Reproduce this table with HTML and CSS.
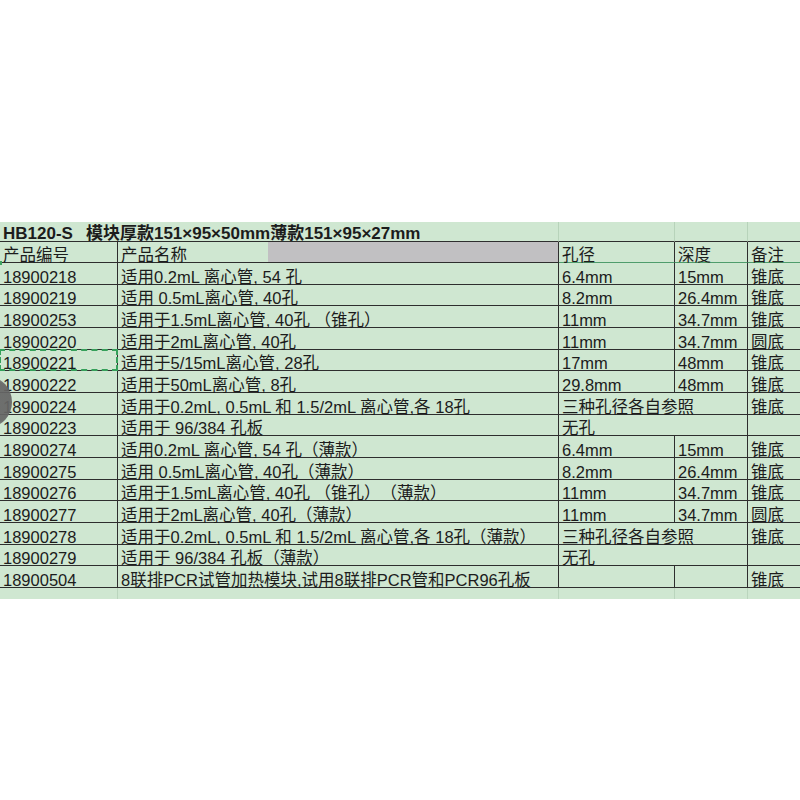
FILE: index.html
```html
<!DOCTYPE html>
<html lang="zh">
<head>
<meta charset="utf-8">
<title>HB120-S</title>
<link rel="stylesheet" href="styles.css">
</head>
<body>
<div class="sheet">
  <div class="blob"></div>

  <div class="c title span2"><span class="code">HB120-S</span>模块厚款151×95×50mm薄款151×95×27mm</div>
  <div class="c title-e"></div>
  <div class="c title-e"></div>
  <div class="c title-e last"></div>

  <div class="c">产品编号</div>
  <div class="c hdr-name">产品名称</div>
  <div class="c hdr-g">孔径</div>
  <div class="c hdr-g">深度</div>
  <div class="c hdr-g last">备注</div>

  <div class="c mark">18900218</div>
  <div class="c">适用0.2mL 离心管, 54 孔</div>
  <div class="c">6.4mm</div>
  <div class="c">15mm</div>
  <div class="c last">锥底</div>

  <div class="c">18900219</div>
  <div class="c">适用 0.5mL离心管, 40孔</div>
  <div class="c">8.2mm</div>
  <div class="c">26.4mm</div>
  <div class="c last">锥底</div>

  <div class="c">18900253</div>
  <div class="c">适用于1.5mL离心管, 40孔 （锥孔）</div>
  <div class="c">11mm</div>
  <div class="c">34.7mm</div>
  <div class="c last">锥底</div>

  <div class="c">18900220</div>
  <div class="c">适用于2mL离心管, 40孔</div>
  <div class="c">11mm</div>
  <div class="c">34.7mm</div>
  <div class="c last">圆底</div>

  <div class="c sel">18900221</div>
  <div class="c">适用于5/15mL离心管, 28孔</div>
  <div class="c">17mm</div>
  <div class="c">48mm</div>
  <div class="c last">锥底</div>

  <div class="c">18900222</div>
  <div class="c">适用于50mL离心管, 8孔</div>
  <div class="c">29.8mm</div>
  <div class="c">48mm</div>
  <div class="c last">锥底</div>

  <div class="c">18900224</div>
  <div class="c">适用于0.2mL, 0.5mL 和 1.5/2mL 离心管,各 18孔</div>
  <div class="c span2">三种孔径各自参照</div>
  <div class="c last">锥底</div>

  <div class="c">18900223</div>
  <div class="c">适用于 96/384 孔板</div>
  <div class="c span2">无孔</div>
  <div class="c last"></div>

  <div class="c">18900274</div>
  <div class="c">适用0.2mL 离心管, 54 孔（薄款）</div>
  <div class="c">6.4mm</div>
  <div class="c">15mm</div>
  <div class="c last">锥底</div>

  <div class="c">18900275</div>
  <div class="c">适用 0.5mL离心管, 40孔（薄款）</div>
  <div class="c">8.2mm</div>
  <div class="c">26.4mm</div>
  <div class="c last">锥底</div>

  <div class="c">18900276</div>
  <div class="c">适用于1.5mL离心管, 40孔 （锥孔）（薄款）</div>
  <div class="c">11mm</div>
  <div class="c">34.7mm</div>
  <div class="c last">锥底</div>

  <div class="c">18900277</div>
  <div class="c">适用于2mL离心管, 40孔（薄款）</div>
  <div class="c">11mm</div>
  <div class="c">34.7mm</div>
  <div class="c last">圆底</div>

  <div class="c">18900278</div>
  <div class="c">适用于0.2mL, 0.5mL 和 1.5/2mL 离心管,各 18孔（薄款）</div>
  <div class="c span2">三种孔径各自参照</div>
  <div class="c last">锥底</div>

  <div class="c">18900279</div>
  <div class="c">适用于 96/384 孔板（薄款）</div>
  <div class="c span2">无孔</div>
  <div class="c last"></div>

  <div class="c">18900504</div>
  <div class="c">8联排PCR试管加热模块,试用8联排PCR管和PCR96孔板</div>
  <div class="c"></div>
  <div class="c"></div>
  <div class="c last">锥底</div>

  <div class="c foot"></div>
  <div class="c foot"></div>
  <div class="c foot"></div>
  <div class="c foot"></div>
  <div class="c foot last"></div>
</div>
</body>
</html>
```

FILE: styles.css
```css
html, body {
  margin: 0;
  padding: 0;
  background: #ffffff;
}

body {
  font-family: "Liberation Sans", "Noto Sans CJK SC", sans-serif;
  font-size: 16.5px;
  color: #1c1c1c;
  overflow: hidden;
  text-spacing-trim: space-all;
}

.sheet {
  position: relative;
  margin-top: 222px;
  width: 800px;
  background: #cfe7d1;
  display: grid;
  grid-template-columns: 118px 441px 116px 73px 52px;
  grid-template-rows: 20px 21px repeat(15, 21.667px) 11px;
}

.c {
  box-sizing: border-box;
  min-width: 0;
  display: flex;
  align-items: flex-end;
  padding: 0 3px;
  line-height: 13px;
  white-space: nowrap;
  border-right: 1px solid #2e2e2e;
  border-bottom: 1px solid #2e2e2e;
  position: relative;
}

.c.last {
  border-right: none;
}

.span2 {
  grid-column: span 2;
}

.title {
  font-weight: bold;
  font-size: 17px;
  padding-bottom: 1px;
  border-right-color: #b7d3ba;
}

.title .code {
  margin-right: 13px;
}

.title-e {
  border-right-color: #b7d3ba;
}

.hdr-name {
  background: linear-gradient(to right, transparent 150px, #c1c0c2 150px);
}

.hdr-g {
  border-bottom-color: #4f9d6c;
}

.foot {
  border-bottom: none;
  border-right-color: #bad5bd;
}

.sel::after {
  content: "";
  position: absolute;
  left: -1px;
  right: -1px;
  top: -1px;
  bottom: -1px;
  border: 2px dashed #35a05a;
  pointer-events: none;
}

.mark::before {
  content: "";
  position: absolute;
  left: 0;
  top: -2px;
  width: 2px;
  height: 4px;
  background: #3fa562;
}

.blob {
  position: absolute;
  left: -34px;
  top: 155px;
  width: 46px;
  height: 50px;
  border-radius: 50%;
  background: radial-gradient(ellipse at 55% 50%, rgba(105,105,105,0.95) 0%, rgba(100,100,100,0.92) 60%, rgba(120,120,120,0.6) 80%, rgba(150,150,150,0) 100%);
  z-index: 2;
}
```
